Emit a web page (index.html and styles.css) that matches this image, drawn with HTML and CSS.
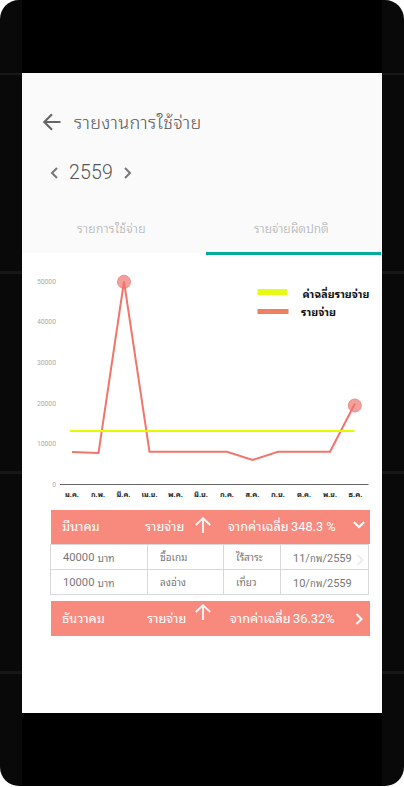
FILE: index.html
```html
<!DOCTYPE html>
<html lang="th">
<head>
<meta charset="utf-8">
<title>รายงานการใช้จ่าย</title>
<link rel="stylesheet" href="styles.css">
</head>
<body>
<div class="device">
  <main class="screen">
    <header class="header">
      <div class="title-bar">
        <svg class="back" viewBox="0 0 18 18"><path d="M17.500 9H1.500M9 1.200L1.300 9L9 16.800"/></svg>
        <h1 class="title">รายงานการใช้จ่าย</h1>
      </div>
      <div class="year-bar">
        <svg class="chevron" viewBox="0 0 8 12"><path d="M7 1L2 6L7 11"/></svg>
        <span class="year">2559</span>
        <svg class="chevron" viewBox="0 0 8 12"><path d="M1 1L6 6L1 11"/></svg>
      </div>
      <nav class="tabs">
        <a class="tab"><span class="tab-first">รายการใช้จ่าย</span></a>
        <a class="tab tab-active"><span class="tab-second">รายจ่ายผิดปกติ</span></a>
      </nav>
    </header>
    <svg class="chart" viewBox="22 255 360 255">
      <g class="axis-values">
        <text x="56" y="283.500">50000</text>
        <text x="56" y="324">40000</text>
        <text x="56" y="364.500">30000</text>
        <text x="56" y="405.500">20000</text>
        <text x="56" y="446">10000</text>
        <text x="56" y="486.500">0</text>
      </g>
      <rect class="key-average" x="257.500" y="289" width="29.500" height="6"/>
      <rect class="key-expense" x="257.500" y="309" width="31" height="5"/>
      <g class="legend">
        <text x="302.500" y="297.500" textLength="67" lengthAdjust="spacingAndGlyphs">ค่าฉลี่ยรายจ่าย</text>
        <text x="301" y="316" textLength="35" lengthAdjust="spacingAndGlyphs">รายจ่าย</text>
      </g>
      <path class="baseline" d="M60 484.500H368.500"/>
      <circle class="marker" cx="124" cy="281.800" r="6.500"/>
      <circle class="marker" cx="354.800" cy="405.500" r="6.500"/>
      <path class="expense" d="M72 452L98.500 453L124 281.500L149.500 451.800H227L252.500 460L278 451.800H330L355 403.500"/>
      <path class="average" d="M70 431H354.500"/>
      <g class="months">
        <text x="72" y="496.500" textLength="14" lengthAdjust="spacingAndGlyphs">ม.ค.</text>
        <text x="98" y="496.500" textLength="14" lengthAdjust="spacingAndGlyphs">ก.พ.</text>
        <text x="123.500" y="496.500" textLength="14" lengthAdjust="spacingAndGlyphs">มี.ค.</text>
        <text x="149.500" y="496.500" textLength="16" lengthAdjust="spacingAndGlyphs">เม.ย.</text>
        <text x="175.500" y="496.500" textLength="15" lengthAdjust="spacingAndGlyphs">พ.ค.</text>
        <text x="201" y="496.500" textLength="14" lengthAdjust="spacingAndGlyphs">มิ.ย.</text>
        <text x="227" y="496.500" textLength="14" lengthAdjust="spacingAndGlyphs">ก.ค.</text>
        <text x="252.500" y="496.500" textLength="14" lengthAdjust="spacingAndGlyphs">ส.ค.</text>
        <text x="278" y="496.500" textLength="14" lengthAdjust="spacingAndGlyphs">ก.ย.</text>
        <text x="304" y="496.500" textLength="14" lengthAdjust="spacingAndGlyphs">ต.ค.</text>
        <text x="330" y="496.500" textLength="14" lengthAdjust="spacingAndGlyphs">พ.ย.</text>
        <text x="355.500" y="496.500" textLength="14" lengthAdjust="spacingAndGlyphs">ธ.ค.</text>
      </g>
    </svg>
    <section class="report">
      <div class="month-row">
        <span class="month">มีนาคม</span>
        <span class="kind">รายจ่าย</span>
        <svg class="up" viewBox="0 0 16 16"><path d="M8 16V1.500M.8 8L8 1.200L15.200 8"/></svg>
        <span class="compare">จากค่าเฉลี่ย</span>
        <span class="percent">348.3 %</span>
        <svg class="toggle toggle-open" viewBox="0 0 12 12"><path d="M.8 3L6 8L11.200 3"/></svg>
      </div>
      <div class="details">
        <div class="detail-row">
          <span class="cell">40000 <span class="unit">บาท</span></span>
          <span class="cell note">ซื้อเกม</span>
          <span class="cell note">ไร้สาระ</span>
          <span class="cell"><span class="date">11/<small>กพ</small>/2559</span><svg class="more" viewBox="0 0 12 12"><path d="M3.500 1L8.500 6L3.500 11"/></svg></span>
        </div>
        <div class="detail-row">
          <span class="cell">10000 <span class="unit">บาท</span></span>
          <span class="cell note">ลงอ่าง</span>
          <span class="cell note">เที่ยว</span>
          <span class="cell"><span class="date">10/<small>กพ</small>/2559</span></span>
        </div>
      </div>
      <div class="month-row month-row-last">
        <span class="month">ธันวาคม</span>
        <span class="kind">รายจ่าย</span>
        <svg class="up" viewBox="0 0 16 16"><path d="M8 16V1.500M.8 8L8 1.200L15.200 8"/></svg>
        <span class="compare">จากค่าเฉลี่ย</span>
        <span class="percent">36.32%</span>
        <svg class="toggle" viewBox="0 0 12 12"><path d="M3.500 1L8.500 6L3.500 11"/></svg>
      </div>
    </section>
  </main>
</div>
</body>
</html>
```
FILE: styles.css
```css
* { box-sizing: border-box; }
body { margin: 0; background: #fff; font-family: Roboto, "Noto Sans Thai Looped", "Noto Looped Thai", Loma, Waree, Garuda, "Noto Sans Thai", sans-serif; }
svg { display: block; fill: none; flex: none; }
.device {
  width: 404px; height: 786px; padding: 73px 22px; border-radius: 19px; overflow: hidden;
  background:
    linear-gradient(#000, #000) 22px 0 / 360px 100% no-repeat,
    linear-gradient(#171717, #171717) 0 73px / 100% 2px no-repeat,
    linear-gradient(#171717, #171717) 0 271px / 100% 3px no-repeat,
    linear-gradient(#171717, #171717) 0 471px / 100% 3px no-repeat,
    linear-gradient(#171717, #171717) 0 671px / 100% 3px no-repeat,
    #090909;
}
.screen { height: 640px; background: #fff; overflow: hidden; }
.header { height: 182px; background: linear-gradient(#fafafa, #fafafa) 0 0 / 100% 180px no-repeat; }
.title-bar { display: flex; align-items: center; height: 64px; padding: 34px 0 0 21px; }
.back { width: 18px; height: 18px; stroke: #666; stroke-width: 2.1; }
.title { margin: 2px 0 0 13px; font-size: 18px; font-weight: 300; line-height: 30px; letter-spacing: .3px; color: #555; white-space: nowrap; }
.year-bar { display: flex; align-items: center; height: 72px; padding: 0 0 0 28px; }
.chevron { width: 8px; height: 12px; stroke: #777; stroke-width: 2; }
.year { width: 45px; margin: -2px 10px 0 11px; font-size: 19.500px; font-weight: 300; letter-spacing: .2px; color: #555; white-space: nowrap; }
.tabs { display: grid; grid-template-columns: 184px 175px; height: 46px; font-size: 12.300px; font-weight: 300; line-height: 40px; letter-spacing: .3px; color: #aaa; white-space: nowrap; }
.tab-first { margin-left: 55px; }
.tab-second { margin-left: 48px; letter-spacing: 0; }
.tab-active { border-bottom: 3px solid #06aa9c; }
.chart { width: 360px; height: 255px; }
.axis-values { font-size: 6.800px; fill: #aaa; text-anchor: end; }
.legend { font-size: 10px; font-weight: 700; fill: #111; }
.months { font-size: 7px; font-weight: 700; fill: #222; text-anchor: middle; }
.key-average { fill: #e8fb18; }
.key-expense { fill: #ee8062; }
.baseline { stroke: #666; stroke-width: 1.200; }
.marker { fill: #f1a19d; stroke: #f18b84; stroke-width: 1; }
.expense { stroke: #f2756b; stroke-width: 2; }
.average { stroke: #e4f900; stroke-width: 2.200; }
.report { width: 319px; margin-left: 29px; }
.month-row {
  display: grid; grid-template-columns: 83px 50px 33px 63px 62px 12px; height: 34px; padding-left: 11px;
  align-items: center; background: #f78a7d; color: #fff; font-size: 12.800px; line-height: 34px; white-space: nowrap;
}
.month-row-last { height: 35px; margin-top: 6px; grid-template-columns: 85px 48px 35px 63px 60px 12px; }
.up { width: 16px; height: 16px; margin-bottom: 5px; stroke: #f4f4f4; stroke-width: 1.900; }
.month-row-last .up { margin-bottom: 14px; }
.toggle, .more { width: 12px; height: 12px; stroke: #fff; stroke-width: 2; }
.toggle-open { margin-bottom: 5px; }
.details { width: 319px; margin-left: -1px; border: 1px solid #d9d9d9; }
.detail-row { display: grid; grid-template-columns: 96px 76px 57px 88px; height: 24px; }
.detail-row + .detail-row { height: 25px; border-top: 1px solid #d9d9d9; }
.cell { display: flex; align-items: center; padding-left: 12px; font-size: 11.200px; color: #777; white-space: nowrap; }
.cell + .cell { border-left: 1px solid #d9d9d9; }
.unit { margin-left: 3px; font-size: 10px; }
.note { padding-bottom: 2px; font-size: 10px; }
.date { width: 58px; font-size: 11px; }
.date small { font-size: 9.500px; }
.more { margin: 6px 0 0 3px; stroke: #eee; }
```
